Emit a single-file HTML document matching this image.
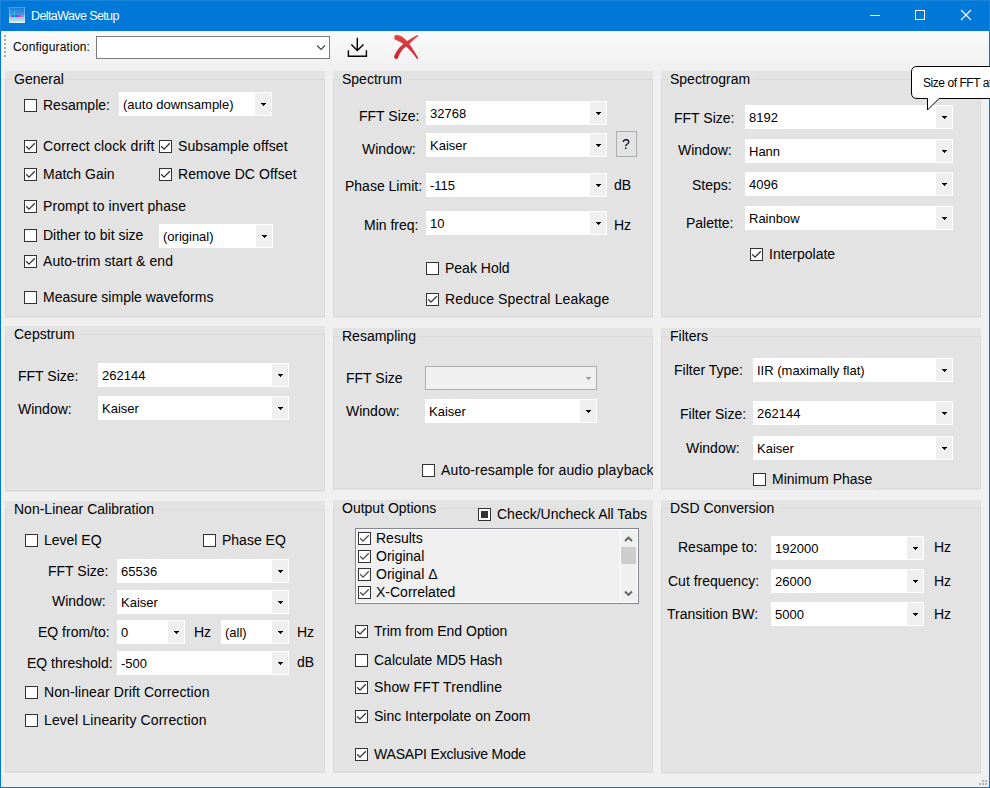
<!DOCTYPE html>
<html><head><meta charset="utf-8"><style>
*{margin:0;padding:0;box-sizing:content-box}
html,body{width:990px;height:788px;overflow:hidden;background:#0078D7;font-family:"Liberation Sans", sans-serif}
.win{position:absolute;left:1px;top:31px;width:988px;height:756px;background:#F0F0F0;overflow:hidden}
.abs{position:absolute}
.t{position:absolute;white-space:nowrap;line-height:16px;font-size:14px;color:#000}
.pn{position:absolute;background:#E3E3E3}
.gb{position:absolute;left:0;border:1px solid #DADADA}
.gbgap{position:absolute;height:3px;background:#E3E3E3}
.cb{position:absolute;width:11px;height:11px;border:1px solid #333;background:#fff}
.cmb{position:absolute;background:#fff}
.cbtn{position:absolute;right:1px;top:1px;width:16px;background:#EFEFEF}
.a1,.a2,.a3{position:absolute;height:1px;background:#000}.a1{left:6px;width:5px}.a2{left:7px;width:3px}.a3{left:8px;width:1px}
.cmbd{position:absolute;background:#F0F0F0;border:1px solid #ADADAD}
</style></head><body>

<div class="abs" style="left:0;top:0;width:990px;height:31px;background:#0078D7"></div>
<div class="abs" style="left:0;top:0;width:990px;height:1px;background:#1A85DA"></div>
<div class="abs" style="left:0;top:0;width:1px;height:31px;background:#1A85DA"></div>
<div class="abs" style="left:989px;top:0;width:1px;height:31px;background:#1A85DA"></div>
<svg class="abs" style="left:9px;top:7px" width="16" height="16" shape-rendering="crispEdges">
<defs><linearGradient id="ig" x1="0" y1="0" x2="0" y2="1"><stop offset="0" stop-color="#1C7ED6"/><stop offset="0.45" stop-color="#3F95E0"/><stop offset="0.6" stop-color="#8CC2EC"/><stop offset="1" stop-color="#D8E8F6"/></linearGradient></defs>
<rect width="16" height="16" fill="url(#ig)"/>
<rect x="0" y="0" width="1" height="16" fill="#fff" opacity="0.3"/>
<rect x="15" y="0" width="1" height="16" fill="#fff" opacity="0.3"/>
<rect x="0" y="0" width="16" height="1" fill="#fff" opacity="0.2"/>
<rect x="0" y="15" width="16" height="1" fill="#fff" opacity="0.6"/>
<rect x="5" y="4" width="1" height="4" fill="#22C6EE"/>
<rect x="5" y="10" width="1" height="4" fill="#86E0F6"/>
<rect x="0" y="8" width="2" height="2" fill="#E07CC0"/>
<rect x="2" y="8" width="1" height="2" fill="#B060E8"/>
<rect x="3" y="8" width="2" height="2" fill="#4A4AF0"/>
<rect x="5" y="8" width="1" height="2" fill="#10DCF8"/>
<rect x="6" y="8" width="2" height="2" fill="#5048F0"/>
<rect x="8" y="8" width="2" height="2" fill="#C038E8"/>
<rect x="10" y="8" width="2" height="2" fill="#F04090"/>
<rect x="12" y="8" width="1" height="2" fill="#D868C8"/>
<rect x="13" y="8" width="2" height="2" fill="#A888E8"/>
<rect x="8" y="10" width="4" height="1" fill="#C8A0E8" opacity="0.6"/>
</svg>
<div class="t" style="left:31px;top:8px;font-size:12.5px;color:#fff;letter-spacing:-0.6px">DeltaWave Setup</div>
<div class="abs" style="left:870px;top:15px;width:10px;height:1px;background:#fff"></div>
<div class="abs" style="left:915px;top:10px;width:8px;height:8px;border:1px solid #fff"></div>
<svg class="abs" style="left:960px;top:9px" width="12" height="12"><path d="M1 1 L11 11 M11 1 L1 11" stroke="#fff" stroke-width="1.1"/></svg>
<div class="abs" style="left:1px;top:31px;width:988px;height:756px;background:#F0F0F0"></div>
<div class="abs" style="left:1px;top:31px;width:988px;height:34px;background:linear-gradient(#FBFBFB,#F1F1F1)"></div>
<div class="abs" style="left:4px;top:35px;width:2px;height:2px;background:#AAAAAA"></div>
<div class="abs" style="left:4px;top:39px;width:2px;height:2px;background:#AAAAAA"></div>
<div class="abs" style="left:4px;top:43px;width:2px;height:2px;background:#AAAAAA"></div>
<div class="abs" style="left:4px;top:47px;width:2px;height:2px;background:#AAAAAA"></div>
<div class="abs" style="left:4px;top:51px;width:2px;height:2px;background:#AAAAAA"></div>
<div class="abs" style="left:4px;top:55px;width:2px;height:2px;background:#AAAAAA"></div>
<div class="t" style="left:13px;top:39px;font-size:12px;color:#000;letter-spacing:0.17px">Configuration:</div>
<div class="abs" style="left:96px;top:36px;width:232px;height:21px;border:1px solid #7A7A7A;background:#fff"></div>
<svg class="abs" style="left:316px;top:45px" width="10" height="6"><path d="M1 0.5 L5 4.5 L9 0.5" fill="none" stroke="#444" stroke-width="1.1"/></svg>
<svg class="abs" style="left:340px;top:34px" width="32" height="26"><g fill="none" stroke="#000" stroke-width="1.4">
<path d="M17.3 3.8 V16.3"/><path d="M11.4 10.6 L17.3 16.5 L23.5 10.4"/><path d="M8.4 16.2 V22.3 H26.4 V16.2"/></g></svg>
<svg class="abs" style="left:390px;top:32px" width="32" height="30">
<defs><linearGradient id="rg" x1="0" y1="0" x2="0" y2="1"><stop offset="0" stop-color="#E2454B"/><stop offset="1" stop-color="#C8242C"/></linearGradient></defs>
<path fill="url(#rg)" d="M4.3 5 C4.5 3.8 5.2 3.2 6.5 3.1 C8.5 3 10.5 3.8 12 4.8 C14 6 15 7 16 8 C17.5 9.5 19 11.3 20.2 13 C21.5 15 22.8 17 24 19 C25.5 21.5 27 24 28.4 26.3 L27 27 C25.5 25 23.8 22.8 22 20.5 C20 18.2 18 16.2 16.2 14.5 C14.8 13.2 13.5 12 12 11 C10.8 10.2 9.4 9.6 8 9 C7 8.6 6 8.2 5 7.5 C4.4 6.9 4.2 6 4.3 5 Z"/>
<path fill="url(#rg)" d="M28 3 C25 4 20 7 16 10 C13 12 10 14.5 7.5 18 C6 20.5 4.3 23 4.1 24.5 C4 26 5 27.2 6.5 27 C7.5 26.9 7.9 26.5 8 26 C8.8 23.5 10.5 20.5 12.3 18 C13.5 16.5 14.8 15.5 16.2 14.5 C18.5 12.5 21 10.5 24 7.5 C25.5 6.2 27 5.3 28 4.5 Z"/>
</svg>
<div class="pn" style="left:5px;top:71px;width:320px;height:247px"><div class="gb" style="top:8px;width:318px;height:236px"></div><div class="gbgap" style="left:7px;top:7px;width:56px"></div></div>
<div class="t" style="left:14px;top:71px;font-size:14px;color:#000;">General</div>
<div class="pn" style="left:333px;top:71px;width:320px;height:247px"><div class="gb" style="top:8px;width:318px;height:236px"></div><div class="gbgap" style="left:7px;top:7px;width:66px"></div></div>
<div class="t" style="left:342px;top:71px;font-size:14px;color:#000;">Spectrum</div>
<div class="pn" style="left:661px;top:71px;width:320px;height:247px"><div class="gb" style="top:8px;width:318px;height:236px"></div><div class="gbgap" style="left:7px;top:7px;width:87px"></div></div>
<div class="t" style="left:670px;top:71px;font-size:14px;color:#000;">Spectrogram</div>
<div class="pn" style="left:5px;top:326px;width:320px;height:166px"><div class="gb" style="top:8px;width:318px;height:155px"></div><div class="gbgap" style="left:7px;top:7px;width:67px"></div></div>
<div class="t" style="left:14px;top:326px;font-size:14px;color:#000;">Cepstrum</div>
<div class="pn" style="left:333px;top:328px;width:320px;height:162px"><div class="gb" style="top:8px;width:318px;height:151px"></div><div class="gbgap" style="left:7px;top:7px;width:80px"></div></div>
<div class="t" style="left:342px;top:328px;font-size:14px;color:#000;">Resampling</div>
<div class="pn" style="left:661px;top:328px;width:320px;height:162px"><div class="gb" style="top:8px;width:318px;height:151px"></div><div class="gbgap" style="left:7px;top:7px;width:45px"></div></div>
<div class="t" style="left:670px;top:328px;font-size:14px;color:#000;">Filters</div>
<div class="pn" style="left:5px;top:501px;width:320px;height:272px"><div class="gb" style="top:8px;width:318px;height:261px"></div><div class="gbgap" style="left:7px;top:7px;width:147px"></div></div>
<div class="t" style="left:14px;top:501px;font-size:14px;color:#000;">Non-Linear Calibration</div>
<div class="pn" style="left:333px;top:500px;width:320px;height:273px"><div class="gb" style="top:8px;width:318px;height:262px"></div><div class="gbgap" style="left:7px;top:7px;width:101px"></div></div>
<div class="t" style="left:342px;top:500px;font-size:14px;color:#000;">Output Options</div>
<div class="pn" style="left:661px;top:500px;width:320px;height:274px"><div class="gb" style="top:8px;width:318px;height:263px"></div><div class="gbgap" style="left:7px;top:7px;width:110px"></div></div>
<div class="t" style="left:670px;top:500px;font-size:14px;color:#000;">DSD Conversion</div>
<div class="cb" style="left:24px;top:99px"></div>
<div class="t" style="left:43px;top:97px;font-size:14px;color:#000;">Resample:</div>
<div class="cmb" style="left:119px;top:92px;width:153px;height:24px"><div class="cbtn" style="height:22px"><div class="a1" style="top:10px"></div><div class="a2" style="top:11px"></div><div class="a3" style="top:12px"></div></div><div class="t" style="left:4px;top:5px;font-size:13px">(auto downsample)</div></div>
<div class="cb" style="left:24px;top:140px"><svg width="13" height="13" style="position:absolute;left:-1px;top:-1px"><path d="M2.2 6.3 L5 9.1 L10.8 3.3" fill="none" stroke="#333" stroke-width="1.3"/></svg></div>
<div class="t" style="left:43px;top:138px;font-size:14px;color:#000;letter-spacing:0.14px">Correct clock drift</div>
<div class="cb" style="left:159px;top:140px"><svg width="13" height="13" style="position:absolute;left:-1px;top:-1px"><path d="M2.2 6.3 L5 9.1 L10.8 3.3" fill="none" stroke="#333" stroke-width="1.3"/></svg></div>
<div class="t" style="left:178px;top:138px;font-size:14px;color:#000;letter-spacing:0.11px">Subsample offset</div>
<div class="cb" style="left:24px;top:168px"><svg width="13" height="13" style="position:absolute;left:-1px;top:-1px"><path d="M2.2 6.3 L5 9.1 L10.8 3.3" fill="none" stroke="#333" stroke-width="1.3"/></svg></div>
<div class="t" style="left:43px;top:166px;font-size:14px;color:#000;">Match Gain</div>
<div class="cb" style="left:159px;top:168px"><svg width="13" height="13" style="position:absolute;left:-1px;top:-1px"><path d="M2.2 6.3 L5 9.1 L10.8 3.3" fill="none" stroke="#333" stroke-width="1.3"/></svg></div>
<div class="t" style="left:178px;top:166px;font-size:14px;color:#000;letter-spacing:0.09px">Remove DC Offset</div>
<div class="cb" style="left:24px;top:200px"><svg width="13" height="13" style="position:absolute;left:-1px;top:-1px"><path d="M2.2 6.3 L5 9.1 L10.8 3.3" fill="none" stroke="#333" stroke-width="1.3"/></svg></div>
<div class="t" style="left:43px;top:198px;font-size:14px;color:#000;letter-spacing:0.1px">Prompt to invert phase</div>
<div class="cb" style="left:24px;top:229px"></div>
<div class="t" style="left:43px;top:227px;font-size:14px;color:#000;">Dither to bit size</div>
<div class="cmb" style="left:159px;top:224px;width:114px;height:24px"><div class="cbtn" style="height:22px"><div class="a1" style="top:10px"></div><div class="a2" style="top:11px"></div><div class="a3" style="top:12px"></div></div><div class="t" style="left:4px;top:5px;font-size:13px">(original)</div></div>
<div class="cb" style="left:24px;top:255px"><svg width="13" height="13" style="position:absolute;left:-1px;top:-1px"><path d="M2.2 6.3 L5 9.1 L10.8 3.3" fill="none" stroke="#333" stroke-width="1.3"/></svg></div>
<div class="t" style="left:43px;top:253px;font-size:14px;color:#000;letter-spacing:0.08px">Auto-trim start &amp; end</div>
<div class="cb" style="left:24px;top:291px"></div>
<div class="t" style="left:43px;top:289px;font-size:14px;color:#000;">Measure simple waveforms</div>
<div class="t" style="left:359px;top:108px;font-size:14px;color:#000;">FFT Size:</div>
<div class="cmb" style="left:426px;top:101px;width:181px;height:24px"><div class="cbtn" style="height:22px"><div class="a1" style="top:10px"></div><div class="a2" style="top:11px"></div><div class="a3" style="top:12px"></div></div><div class="t" style="left:4px;top:5px;font-size:13px">32768</div></div>
<div class="t" style="left:362px;top:141px;font-size:14px;color:#000;">Window:</div>
<div class="cmb" style="left:426px;top:133px;width:181px;height:24px"><div class="cbtn" style="height:22px"><div class="a1" style="top:10px"></div><div class="a2" style="top:11px"></div><div class="a3" style="top:12px"></div></div><div class="t" style="left:4px;top:5px;font-size:13px">Kaiser</div></div>
<div class="abs" style="left:616px;top:131px;width:19px;height:24px;border:1px solid #ADADAD;background:#E3E3E3"></div>
<div class="t" style="left:622px;top:136px;font-size:14px;color:#000;">?</div>
<div class="t" style="left:345px;top:178px;font-size:14px;color:#000;">Phase Limit:</div>
<div class="cmb" style="left:426px;top:173px;width:181px;height:24px"><div class="cbtn" style="height:22px"><div class="a1" style="top:10px"></div><div class="a2" style="top:11px"></div><div class="a3" style="top:12px"></div></div><div class="t" style="left:4px;top:5px;font-size:13px">-115</div></div>
<div class="t" style="left:614px;top:177px;font-size:14px;color:#000;">dB</div>
<div class="t" style="left:364px;top:217px;font-size:14px;color:#000;">Min freq:</div>
<div class="cmb" style="left:426px;top:211px;width:181px;height:24px"><div class="cbtn" style="height:22px"><div class="a1" style="top:10px"></div><div class="a2" style="top:11px"></div><div class="a3" style="top:12px"></div></div><div class="t" style="left:4px;top:5px;font-size:13px">10</div></div>
<div class="t" style="left:614px;top:217px;font-size:14px;color:#000;">Hz</div>
<div class="cb" style="left:426px;top:262px"></div>
<div class="t" style="left:445px;top:260px;font-size:14px;color:#000;">Peak Hold</div>
<div class="cb" style="left:426px;top:293px"><svg width="13" height="13" style="position:absolute;left:-1px;top:-1px"><path d="M2.2 6.3 L5 9.1 L10.8 3.3" fill="none" stroke="#333" stroke-width="1.3"/></svg></div>
<div class="t" style="left:445px;top:291px;font-size:14px;color:#000;letter-spacing:0.14px">Reduce Spectral Leakage</div>
<div class="t" style="left:674px;top:110px;font-size:14px;color:#000;">FFT Size:</div>
<div class="cmb" style="left:745px;top:105px;width:208px;height:24px"><div class="cbtn" style="height:22px"><div class="a1" style="top:10px"></div><div class="a2" style="top:11px"></div><div class="a3" style="top:12px"></div></div><div class="t" style="left:4px;top:5px;font-size:13px">8192</div></div>
<div class="t" style="left:678px;top:142px;font-size:14px;color:#000;">Window:</div>
<div class="cmb" style="left:745px;top:139px;width:208px;height:24px"><div class="cbtn" style="height:22px"><div class="a1" style="top:10px"></div><div class="a2" style="top:11px"></div><div class="a3" style="top:12px"></div></div><div class="t" style="left:4px;top:5px;font-size:13px">Hann</div></div>
<div class="t" style="left:692px;top:177px;font-size:14px;color:#000;">Steps:</div>
<div class="cmb" style="left:745px;top:172px;width:208px;height:24px"><div class="cbtn" style="height:22px"><div class="a1" style="top:10px"></div><div class="a2" style="top:11px"></div><div class="a3" style="top:12px"></div></div><div class="t" style="left:4px;top:5px;font-size:13px">4096</div></div>
<div class="t" style="left:686px;top:215px;font-size:14px;color:#000;">Palette:</div>
<div class="cmb" style="left:745px;top:206px;width:208px;height:24px"><div class="cbtn" style="height:22px"><div class="a1" style="top:10px"></div><div class="a2" style="top:11px"></div><div class="a3" style="top:12px"></div></div><div class="t" style="left:4px;top:5px;font-size:13px">Rainbow</div></div>
<div class="cb" style="left:750px;top:248px"><svg width="13" height="13" style="position:absolute;left:-1px;top:-1px"><path d="M2.2 6.3 L5 9.1 L10.8 3.3" fill="none" stroke="#333" stroke-width="1.3"/></svg></div>
<div class="t" style="left:769px;top:246px;font-size:14px;color:#000;">Interpolate</div>
<div class="t" style="left:18px;top:368px;font-size:14px;color:#000;">FFT Size:</div>
<div class="cmb" style="left:98px;top:363px;width:191px;height:24px"><div class="cbtn" style="height:22px"><div class="a1" style="top:10px"></div><div class="a2" style="top:11px"></div><div class="a3" style="top:12px"></div></div><div class="t" style="left:4px;top:5px;font-size:13px">262144</div></div>
<div class="t" style="left:18px;top:401px;font-size:14px;color:#000;">Window:</div>
<div class="cmb" style="left:98px;top:396px;width:191px;height:24px"><div class="cbtn" style="height:22px"><div class="a1" style="top:10px"></div><div class="a2" style="top:11px"></div><div class="a3" style="top:12px"></div></div><div class="t" style="left:4px;top:5px;font-size:13px">Kaiser</div></div>
<div class="t" style="left:346px;top:370px;font-size:14px;color:#000;">FFT Size</div>
<div class="cmbd" style="left:425px;top:366px;width:170px;height:22px"><div class="abs" style="left:160px;top:10px;width:5px;height:1px;background:#9A9A9A"></div><div class="abs" style="left:161px;top:11px;width:3px;height:1px;background:#9A9A9A"></div><div class="abs" style="left:162px;top:12px;width:1px;height:1px;background:#9A9A9A"></div></div>
<div class="t" style="left:346px;top:403px;font-size:14px;color:#000;">Window:</div>
<div class="cmb" style="left:425px;top:399px;width:172px;height:24px"><div class="cbtn" style="height:22px"><div class="a1" style="top:10px"></div><div class="a2" style="top:11px"></div><div class="a3" style="top:12px"></div></div><div class="t" style="left:4px;top:5px;font-size:13px">Kaiser</div></div>
<div class="abs" style="left:333px;top:328px;width:320px;height:161px;overflow:hidden">
<div class="cb" style="left:89px;top:136px"></div>
<div class="t" style="left:108px;top:134px;font-size:14px;color:#000;letter-spacing:0.13px">Auto-resample for audio playback</div>
</div>
<div class="t" style="left:674px;top:362px;font-size:14px;color:#000;">Filter Type:</div>
<div class="cmb" style="left:753px;top:358px;width:200px;height:24px"><div class="cbtn" style="height:22px"><div class="a1" style="top:10px"></div><div class="a2" style="top:11px"></div><div class="a3" style="top:12px"></div></div><div class="t" style="left:4px;top:5px;font-size:13px">IIR (maximally flat)</div></div>
<div class="t" style="left:680px;top:406px;font-size:14px;color:#000;">Filter Size:</div>
<div class="cmb" style="left:753px;top:401px;width:200px;height:24px"><div class="cbtn" style="height:22px"><div class="a1" style="top:10px"></div><div class="a2" style="top:11px"></div><div class="a3" style="top:12px"></div></div><div class="t" style="left:4px;top:5px;font-size:13px">262144</div></div>
<div class="t" style="left:686px;top:440px;font-size:14px;color:#000;">Window:</div>
<div class="cmb" style="left:753px;top:436px;width:200px;height:24px"><div class="cbtn" style="height:22px"><div class="a1" style="top:10px"></div><div class="a2" style="top:11px"></div><div class="a3" style="top:12px"></div></div><div class="t" style="left:4px;top:5px;font-size:13px">Kaiser</div></div>
<div class="abs" style="left:752px;top:486px;width:126px;height:4px;background:#E3E3E3"></div>
<div class="cb" style="left:753px;top:473px"></div>
<div class="t" style="left:772px;top:471px;font-size:14px;color:#000;">Minimum Phase</div>
<div class="cb" style="left:25px;top:534px"></div>
<div class="t" style="left:44px;top:532px;font-size:14px;color:#000;">Level EQ</div>
<div class="cb" style="left:203px;top:534px"></div>
<div class="t" style="left:222px;top:532px;font-size:14px;color:#000;">Phase EQ</div>
<div class="t" style="left:48px;top:563px;font-size:14px;color:#000;">FFT Size:</div>
<div class="cmb" style="left:117px;top:559px;width:172px;height:24px"><div class="cbtn" style="height:22px"><div class="a1" style="top:10px"></div><div class="a2" style="top:11px"></div><div class="a3" style="top:12px"></div></div><div class="t" style="left:4px;top:5px;font-size:13px">65536</div></div>
<div class="t" style="left:52px;top:593px;font-size:14px;color:#000;">Window:</div>
<div class="cmb" style="left:117px;top:590px;width:172px;height:24px"><div class="cbtn" style="height:22px"><div class="a1" style="top:10px"></div><div class="a2" style="top:11px"></div><div class="a3" style="top:12px"></div></div><div class="t" style="left:4px;top:5px;font-size:13px">Kaiser</div></div>
<div class="t" style="left:38px;top:624px;font-size:14px;color:#000;">EQ from/to:</div>
<div class="cmb" style="left:117px;top:620px;width:68px;height:24px"><div class="cbtn" style="height:22px"><div class="a1" style="top:10px"></div><div class="a2" style="top:11px"></div><div class="a3" style="top:12px"></div></div><div class="t" style="left:4px;top:5px;font-size:13px">0</div></div>
<div class="t" style="left:194px;top:624px;font-size:14px;color:#000;">Hz</div>
<div class="cmb" style="left:221px;top:620px;width:68px;height:24px"><div class="cbtn" style="height:22px"><div class="a1" style="top:10px"></div><div class="a2" style="top:11px"></div><div class="a3" style="top:12px"></div></div><div class="t" style="left:4px;top:5px;font-size:13px">(all)</div></div>
<div class="t" style="left:297px;top:624px;font-size:14px;color:#000;">Hz</div>
<div class="t" style="left:27px;top:655px;font-size:14px;color:#000;">EQ threshold:</div>
<div class="abs" style="left:117px;top:655px;width:1px;height:16px;background:#E3E3E3"></div>
<div class="cmb" style="left:117px;top:651px;width:172px;height:24px"><div class="cbtn" style="height:22px"><div class="a1" style="top:10px"></div><div class="a2" style="top:11px"></div><div class="a3" style="top:12px"></div></div><div class="t" style="left:4px;top:5px;font-size:13px">-500</div></div>
<div class="t" style="left:297px;top:654px;font-size:14px;color:#000;">dB</div>
<div class="cb" style="left:25px;top:686px"></div>
<div class="t" style="left:44px;top:684px;font-size:14px;color:#000;letter-spacing:0.11px">Non-linear Drift Correction</div>
<div class="cb" style="left:25px;top:714px"></div>
<div class="t" style="left:44px;top:712px;font-size:14px;color:#000;letter-spacing:0.15px">Level Linearity Correction</div>
<div class="abs" style="left:476px;top:501px;width:177px;height:24px;background:#E3E3E3"></div>
<div class="cb" style="left:478px;top:508px"><div style="position:absolute;left:2px;top:2px;width:7px;height:7px;background:#333"></div></div>
<div class="t" style="left:497px;top:506px;font-size:14px;color:#000;">Check/Uncheck All Tabs</div>
<div class="abs" style="left:355px;top:528px;width:282px;height:74px;border:1px solid #828790;background:#F0F0F0;overflow:hidden">
<div class="cb" style="left:2px;top:3px"><svg width="13" height="13" style="position:absolute;left:-1px;top:-1px"><path d="M2.2 6.3 L5 9.1 L10.8 3.3" fill="none" stroke="#4A4A4A" stroke-width="1.25"/></svg></div>
<div class="t" style="left:20px;top:1px">Results</div>
<div class="cb" style="left:2px;top:21px"><svg width="13" height="13" style="position:absolute;left:-1px;top:-1px"><path d="M2.2 6.3 L5 9.1 L10.8 3.3" fill="none" stroke="#4A4A4A" stroke-width="1.25"/></svg></div>
<div class="t" style="left:20px;top:19px">Original</div>
<div class="cb" style="left:2px;top:39px"><svg width="13" height="13" style="position:absolute;left:-1px;top:-1px"><path d="M2.2 6.3 L5 9.1 L10.8 3.3" fill="none" stroke="#4A4A4A" stroke-width="1.25"/></svg></div>
<div class="t" style="left:20px;top:37px">Original &#916;</div>
<div class="cb" style="left:2px;top:57px"><svg width="13" height="13" style="position:absolute;left:-1px;top:-1px"><path d="M2.2 6.3 L5 9.1 L10.8 3.3" fill="none" stroke="#4A4A4A" stroke-width="1.25"/></svg></div>
<div class="t" style="left:20px;top:55px">X-Correlated</div>
<div class="abs" style="left:0;top:0;width:280px;height:72px;border:1px solid #fff"></div>
<div class="abs" style="left:264px;top:0;width:1px;height:74px;background:#fff"></div>
<svg class="abs" style="left:268px;top:6px" width="10" height="8"><path d="M1 6 L4.5 2.5 L8 6" fill="none" stroke="#606060" stroke-width="1.8"/></svg>
<div class="abs" style="left:265px;top:18px;width:15px;height:17px;background:#CDCDCD"></div>
<svg class="abs" style="left:268px;top:61px" width="10" height="8"><path d="M1 1.5 L4.5 5 L8 1.5" fill="none" stroke="#606060" stroke-width="1.8"/></svg>
</div>
<div class="cb" style="left:355px;top:625px"><svg width="13" height="13" style="position:absolute;left:-1px;top:-1px"><path d="M2.2 6.3 L5 9.1 L10.8 3.3" fill="none" stroke="#333" stroke-width="1.3"/></svg></div>
<div class="t" style="left:374px;top:623px;font-size:14px;color:#000;">Trim from End Option</div>
<div class="cb" style="left:355px;top:654px"></div>
<div class="t" style="left:374px;top:652px;font-size:14px;color:#000;">Calculate MD5 Hash</div>
<div class="cb" style="left:355px;top:681px"><svg width="13" height="13" style="position:absolute;left:-1px;top:-1px"><path d="M2.2 6.3 L5 9.1 L10.8 3.3" fill="none" stroke="#333" stroke-width="1.3"/></svg></div>
<div class="t" style="left:374px;top:679px;font-size:14px;color:#000;letter-spacing:0.13px">Show FFT Trendline</div>
<div class="cb" style="left:355px;top:710px"><svg width="13" height="13" style="position:absolute;left:-1px;top:-1px"><path d="M2.2 6.3 L5 9.1 L10.8 3.3" fill="none" stroke="#333" stroke-width="1.3"/></svg></div>
<div class="t" style="left:374px;top:708px;font-size:14px;color:#000;">Sinc Interpolate on Zoom</div>
<div class="cb" style="left:355px;top:748px"><svg width="13" height="13" style="position:absolute;left:-1px;top:-1px"><path d="M2.2 6.3 L5 9.1 L10.8 3.3" fill="none" stroke="#333" stroke-width="1.3"/></svg></div>
<div class="t" style="left:374px;top:746px;font-size:14px;color:#000;letter-spacing:-0.19px">WASAPI Exclusive Mode</div>
<div class="t" style="left:678px;top:539px;font-size:14px;color:#000;">Resampe to:</div>
<div class="cmb" style="left:771px;top:536px;width:153px;height:24px"><div class="cbtn" style="height:22px"><div class="a1" style="top:10px"></div><div class="a2" style="top:11px"></div><div class="a3" style="top:12px"></div></div><div class="t" style="left:4px;top:5px;font-size:13px">192000</div></div>
<div class="t" style="left:934px;top:539px;font-size:14px;color:#000;">Hz</div>
<div class="t" style="left:668px;top:573px;font-size:14px;color:#000;">Cut frequency:</div>
<div class="cmb" style="left:771px;top:569px;width:153px;height:24px"><div class="cbtn" style="height:22px"><div class="a1" style="top:10px"></div><div class="a2" style="top:11px"></div><div class="a3" style="top:12px"></div></div><div class="t" style="left:4px;top:5px;font-size:13px">26000</div></div>
<div class="t" style="left:934px;top:573px;font-size:14px;color:#000;">Hz</div>
<div class="t" style="left:667px;top:606px;font-size:14px;color:#000;">Transition BW:</div>
<div class="cmb" style="left:771px;top:602px;width:153px;height:24px"><div class="cbtn" style="height:22px"><div class="a1" style="top:10px"></div><div class="a2" style="top:11px"></div><div class="a3" style="top:12px"></div></div><div class="t" style="left:4px;top:5px;font-size:13px">5000</div></div>
<div class="t" style="left:934px;top:606px;font-size:14px;color:#000;">Hz</div>
<svg class="abs" style="left:905px;top:62px" width="85" height="52">
<path d="M12 4.5 H95 V36.5 H34 L22.5 48 V36.5 H12 Q6.5 36.5 6.5 31 V10 Q6.5 4.5 12 4.5 Z" fill="#fff" stroke="#000" stroke-width="1"/></svg>
<div class="t" style="left:923px;top:75px;font-size:12px;color:#000;letter-spacing:-0.45px">Size of FFT at</div>
<div class="abs" style="left:982px;top:780px;width:2px;height:2px;background:#B4B4B4"></div>
<div class="abs" style="left:985px;top:780px;width:2px;height:2px;background:#B4B4B4"></div>
<div class="abs" style="left:979px;top:783px;width:2px;height:2px;background:#B4B4B4"></div>
<div class="abs" style="left:982px;top:783px;width:2px;height:2px;background:#B4B4B4"></div>
<div class="abs" style="left:985px;top:783px;width:2px;height:2px;background:#B4B4B4"></div>
</body></html>
